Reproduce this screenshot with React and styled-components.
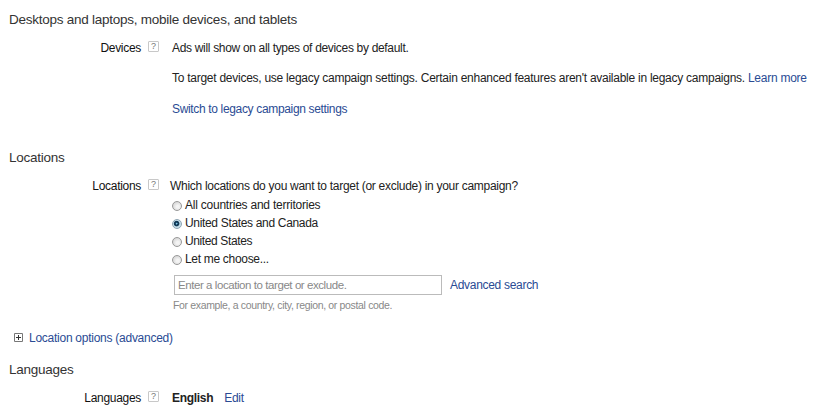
import React, { useState } from 'react';
import styled, { createGlobalStyle } from 'styled-components';

const GlobalStyle = createGlobalStyle`
    body{
        margin:0;
        background:#fff;
        color:#222;
        font-family:"Liberation Sans", Arial, sans-serif;
        font-size:12px;
        letter-spacing:-0.3px;
    }
`

const Page = styled.main`
    box-sizing:border-box;
    width:818px;
    height:418px;
    padding-top:10px;
    overflow:hidden;
`

const Section = styled.section`
    height:${props => props.$height}px;
`

const Heading = styled.h2`
    margin:0 0 0 9px;
    height:20px;
    line-height:20px;
    font-size:13.5px;
    font-weight:400;
    color:#333;
    white-space:nowrap;
    letter-spacing:-0.25px;
`

const Row = styled.div`
    display:flex;
    align-items:flex-start;
    margin-top:8px;
`

const Label = styled.div`
    flex:none;
    width:141px;
    line-height:20px;
    text-align:right;
    color:#111;
`

const Help = styled.span`
    flex:none;
    box-sizing:border-box;
    width:11px;
    height:11px;
    margin:3px 0 0 7px;
    border:1px solid #c8c8c8;
    border-radius:1px;
    color:#777;
    font-size:9px;
    line-height:9px;
    letter-spacing:0;
    text-align:center;
`

const Content = styled.div`
    margin-left:${props => props.$left || 13}px;
`

const Text = styled.p`
    margin:0 0 ${props => props.$gap || 0}px;
    line-height:20px;
    white-space:nowrap;
    letter-spacing:${props => props.$spacing || -0.3}px;
`

const Link = styled.a`
    color:#2a4b94;
    text-decoration:none;
    white-space:nowrap;
    cursor:pointer;
`

const Edit = styled(Link)`
    margin-left:11px;
`

const Option = styled.label`
    display:flex;
    align-items:center;
    height:18px;
    padding-left:2px;
    white-space:nowrap;
    letter-spacing:${props => props.$spacing}px;
`

const Radio = styled.input`
    appearance:none;
    box-sizing:border-box;
    width:10px;
    height:10px;
    margin:1px 3px 0 0;
    border:1px solid #999;
    border-radius:50%;
    background:radial-gradient(circle at 60% 60%, #f4f4f4 20%, #c9c9c9 100%);

    &:checked{
        border-color:#8fa5b3;
        background:radial-gradient(circle at 45% 45%, #7fc4e6 0 0.6px, #123a58 1.2px 2.3px, #c5dde9 3.2px);
    }
`

const Search = styled.div`
    display:flex;
    align-items:center;
    margin:7px 0 0 4px;
`

const Field = styled.input`
    box-sizing:border-box;
    width:268px;
    height:20px;
    margin:0 8px 0 0;
    padding:0 3px;
    border:1px solid #bbb;
    outline:none;
    font:11.5px "Liberation Sans", Arial, sans-serif;
    letter-spacing:-0.43px;

    &::placeholder{
        color:#888;
        opacity:1;
    }
`

const Hint = styled.p`
    margin:3px 0 1px 3px;
    line-height:14px;
    font-size:10.5px;
    color:#888;
    white-space:nowrap;
    letter-spacing:-0.34px;
`

const Expander = styled.div`
    display:flex;
    align-items:center;
    height:20px;
    margin:15px 0 0 13px;
    letter-spacing:-0.26px;

    svg{
        margin-right:5px;
    }
`

const locations = [
    { name: 'All countries and territories', spacing: -0.23 },
    { name: 'United States and Canada', spacing: -0.33 },
    { name: 'United States', spacing: -0.38 },
    { name: 'Let me choose...', spacing: -0.31 },
]

function App() {
    const [selected, setSelected] = useState(1)

    return (
        <Page>
            <GlobalStyle />
            <Section $height={138}>
                <Heading>Desktops and laptops, mobile devices, and tablets</Heading>
                <Row>
                    <Label>Devices</Label>
                    <Help>?</Help>
                    <Content>
                        <Text $gap={10} $spacing={-0.32}>Ads will show on all types of devices by default.</Text>
                        <Text $gap={11} $spacing={-0.26}>
                            To target devices, use legacy campaign settings. Certain enhanced features aren't available in legacy campaigns. <Link>Learn more</Link>
                        </Text>
                        <Text $spacing={-0.34}><Link>Switch to legacy campaign settings</Link></Text>
                    </Content>
                </Row>
            </Section>
            <Section $height={212}>
                <Heading>Locations</Heading>
                <Row>
                    <Label>Locations</Label>
                    <Help>?</Help>
                    <Content $left={11}>
                        <Text $spacing={-0.29}>Which locations do you want to target (or exclude) in your campaign?</Text>
                        {locations.map((location, index) => (
                            <Option key={location.name} $spacing={location.spacing}>
                                <Radio type="radio" name="location" checked={selected === index} onChange={() => setSelected(index)} />
                                {location.name}
                            </Option>
                        ))}
                        <Search>
                            <Field placeholder="Enter a location to target or exclude." />
                            <Link>Advanced search</Link>
                        </Search>
                        <Hint>For example, a country, city, region, or postal code.</Hint>
                    </Content>
                </Row>
                <Expander>
                    <svg width="11" height="11" viewBox="0 0 11 11" fill="none" stroke="#777">
                        <path d="M1.5 0.5h8v8h-8z" />
                        <path d="M3 4.5h5M5.5 2v5" stroke="#333" />
                    </svg>
                    <Link>Location options (advanced)</Link>
                </Expander>
            </Section>
            <Section $height={58}>
                <Heading>Languages</Heading>
                <Row>
                    <Label>Languages</Label>
                    <Help>?</Help>
                    <Content>
                        <Text><b>English</b><Edit>Edit</Edit></Text>
                    </Content>
                </Row>
            </Section>
        </Page>
    )
}

export default App;
